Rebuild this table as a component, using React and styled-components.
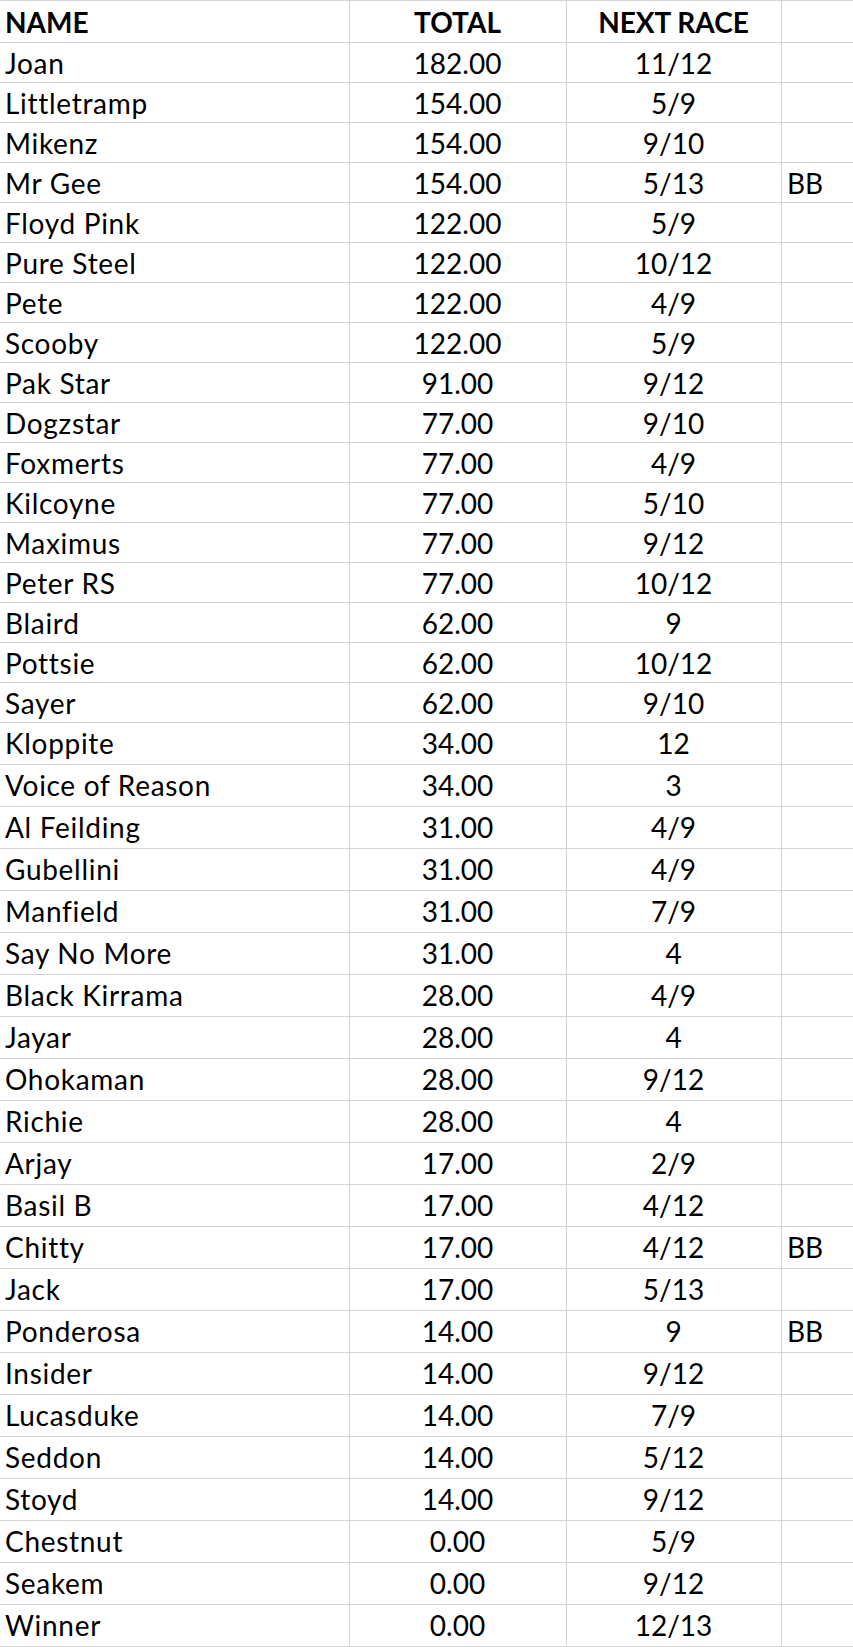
import React from 'react';
import styled, { createGlobalStyle } from 'styled-components';

const rows = [
  ['Joan', 182, '11/12'],
  ['Littletramp', 154, '5/9'],
  ['Mikenz', 154, '9/10'],
  ['Mr Gee', 154, '5/13', 'BB'],
  ['Floyd Pink', 122, '5/9'],
  ['Pure Steel', 122, '10/12'],
  ['Pete', 122, '4/9'],
  ['Scooby', 122, '5/9'],
  ['Pak Star', 91, '9/12'],
  ['Dogzstar', 77, '9/10'],
  ['Foxmerts', 77, '4/9'],
  ['Kilcoyne', 77, '5/10'],
  ['Maximus', 77, '9/12'],
  ['Peter RS', 77, '10/12'],
  ['Blaird', 62, '9'],
  ['Pottsie', 62, '10/12'],
  ['Sayer', 62, '9/10'],
  ['Kloppite', 34, '12'],
  ['Voice of Reason', 34, '3'],
  ['Al Feilding', 31, '4/9'],
  ['Gubellini', 31, '4/9'],
  ['Manfield', 31, '7/9'],
  ['Say No More', 31, '4'],
  ['Black Kirrama', 28, '4/9'],
  ['Jayar', 28, '4'],
  ['Ohokaman', 28, '9/12'],
  ['Richie', 28, '4'],
  ['Arjay', 17, '2/9'],
  ['Basil B', 17, '4/12'],
  ['Chitty', 17, '4/12', 'BB'],
  ['Jack', 17, '5/13'],
  ['Ponderosa', 14, '9', 'BB'],
  ['Insider', 14, '9/12'],
  ['Lucasduke', 14, '7/9'],
  ['Seddon', 14, '5/12'],
  ['Stoyd', 14, '9/12'],
  ['Chestnut', 0, '5/9'],
  ['Seakem', 0, '9/12'],
  ['Winner', 0, '12/13'],
];

// rows after Sayer are a bit taller in the sheet
const TALL_FROM = 17;

const GlobalStyle = createGlobalStyle`
  body {
    margin: 0;
    background: #fff;
    font-family: Lato, "Open Sans", sans-serif;
    color: #000;
  }
`;

const Sheet = styled.div`
  width: 853px;
  border-top: 1px solid #d4d4d4;
`;

const Row = styled.div`
  display: grid;
  grid-template-columns: 350px 217px 215px 1fr;
  height: ${(p) => p.$h}px;
  box-sizing: border-box;
  border-bottom: 1px solid #d4d4d4;
`;

const Cell = styled.div`
  box-sizing: border-box;
  padding: ${(p) => (p.$head ? 4 : 3)}px 6px 0 5px;
  font-size: 28px;
  line-height: 34px;
  font-weight: ${(p) => (p.$head ? 700 : 400)};
  text-align: ${(p) => (p.$center ? 'center' : 'left')};
  letter-spacing: ${(p) => (p.$name ? '0.7px' : 'normal')};
  white-space: nowrap;
  overflow: hidden;

  &:not(:last-child) {
    border-right: 1px solid #d4d4d4;
  }
`;

const App = () => (
  <>
    <GlobalStyle />
    <Sheet>
      <Row $h={42}>
        <Cell $head>NAME</Cell>
        <Cell $head $center>TOTAL</Cell>
        <Cell $head $center>NEXT RACE</Cell>
        <Cell $head />
      </Row>
      {rows.map(([name, total, next, note], i) => (
        <Row key={name} $h={i >= TALL_FROM ? 42 : 40}>
          <Cell $name>{name}</Cell>
          <Cell $center>{total.toFixed(2)}</Cell>
          <Cell $center>{next}</Cell>
          <Cell>{note}</Cell>
        </Row>
      ))}
    </Sheet>
  </>
);

export default App;
